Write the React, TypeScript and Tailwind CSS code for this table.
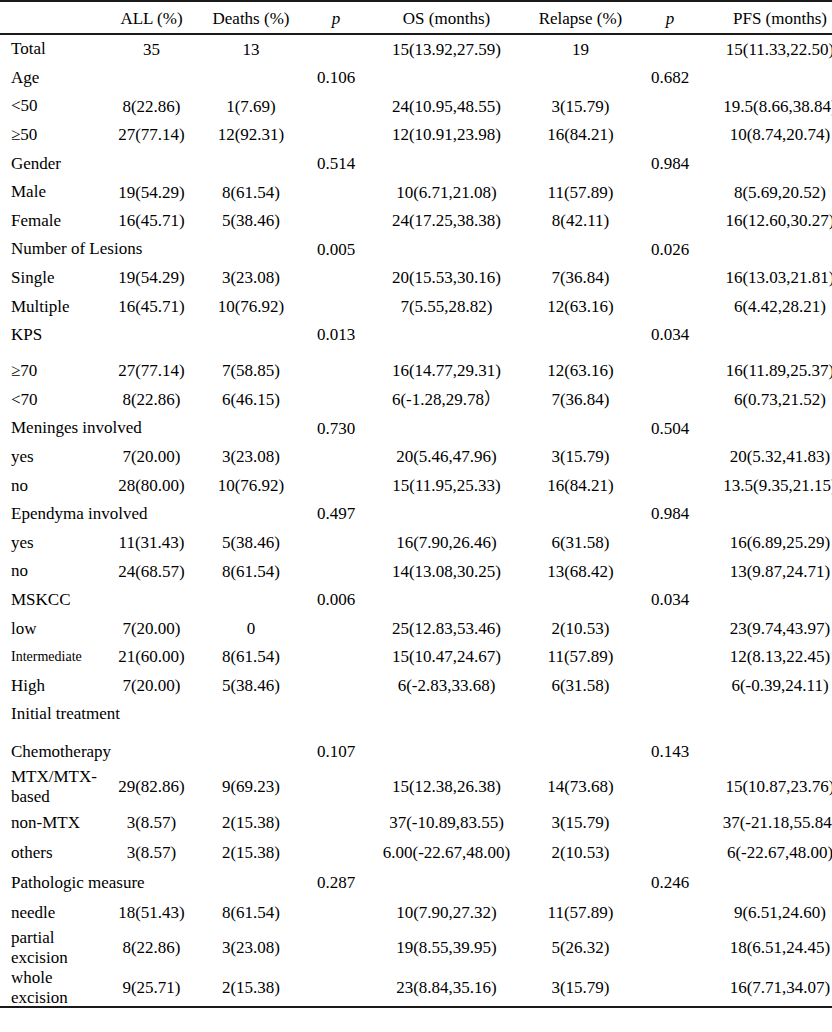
type Row = {
  label: React.ReactNode
  all?: string
  deaths?: string
  p1?: string
  os?: string
  relapse?: string
  p2?: string
  pfs?: string
  h?: string
  small?: boolean
  pad?: string
}

const rows: Row[] = [
  { label: 'Total', all: '35', deaths: '13', os: '15(13.92,27.59)', relapse: '19', pfs: '15(11.33,22.50)' },
  { label: 'Age', p1: '0.106', p2: '0.682' },
  { label: '<50', all: '8(22.86)', deaths: '1(7.69)', os: '24(10.95,48.55)', relapse: '3(15.79)', pfs: '19.5(8.66,38.84)' },
  { label: '≥50', all: '27(77.14)', deaths: '12(92.31)', os: '12(10.91,23.98)', relapse: '16(84.21)', pfs: '10(8.74,20.74)' },
  { label: 'Gender', p1: '0.514', p2: '0.984' },
  { label: 'Male', all: '19(54.29)', deaths: '8(61.54)', os: '10(6.71,21.08)', relapse: '11(57.89)', pfs: '8(5.69,20.52)' },
  { label: 'Female', all: '16(45.71)', deaths: '5(38.46)', os: '24(17.25,38.38)', relapse: '8(42.11)', pfs: '16(12.60,30.27)' },
  { label: 'Number of Lesions', p1: '0.005', p2: '0.026' },
  { label: 'Single', all: '19(54.29)', deaths: '3(23.08)', os: '20(15.53,30.16)', relapse: '7(36.84)', pfs: '16(13.03,21.81)' },
  { label: 'Multiple', all: '16(45.71)', deaths: '10(76.92)', os: '7(5.55,28.82)', relapse: '12(63.16)', pfs: '6(4.42,28.21)' },
  { label: 'KPS', p1: '0.013', p2: '0.034' },
  { label: '≥70', all: '27(77.14)', deaths: '7(58.85)', os: '16(14.77,29.31)', relapse: '12(63.16)', pfs: '16(11.89,25.37)', h: 'h-[36px]', pad: 'pt-[7px]' },
  { label: '<70', all: '8(22.86)', deaths: '6(46.15)', os: '6(-1.28,29.78）', relapse: '7(36.84)', pfs: '6(0.73,21.52)' },
  { label: 'Meninges involved', p1: '0.730', p2: '0.504' },
  { label: 'yes', all: '7(20.00)', deaths: '3(23.08)', os: '20(5.46,47.96)', relapse: '3(15.79)', pfs: '20(5.32,41.83)' },
  { label: 'no', all: '28(80.00)', deaths: '10(76.92)', os: '15(11.95,25.33)', relapse: '16(84.21)', pfs: '13.5(9.35,21.15)' },
  { label: 'Ependyma involved', p1: '0.497', p2: '0.984' },
  { label: 'yes', all: '11(31.43)', deaths: '5(38.46)', os: '16(7.90,26.46)', relapse: '6(31.58)', pfs: '16(6.89,25.29)' },
  { label: 'no', all: '24(68.57)', deaths: '8(61.54)', os: '14(13.08,30.25)', relapse: '13(68.42)', pfs: '13(9.87,24.71)' },
  { label: 'MSKCC', p1: '0.006', p2: '0.034' },
  { label: 'low', all: '7(20.00)', deaths: '0', os: '25(12.83,53.46)', relapse: '2(10.53)', pfs: '23(9.74,43.97)' },
  { label: 'Intermediate', all: '21(60.00)', deaths: '8(61.54)', os: '15(10.47,24.67)', relapse: '11(57.89)', pfs: '12(8.13,22.45)', small: true },
  { label: 'High', all: '7(20.00)', deaths: '5(38.46)', os: '6(-2.83,33.68)', relapse: '6(31.58)', pfs: '6(-0.39,24.11)' },
  { label: 'Initial treatment' },
  { label: 'Chemotherapy', p1: '0.107', p2: '0.143', h: 'h-[38px]', pad: 'pt-[9px]' },
  { label: <>MTX/MTX-<br />based</>, all: '29(82.86)', deaths: '9(69.23)', os: '15(12.38,26.38)', relapse: '14(73.68)', pfs: '15(10.87,23.76)', h: 'h-[41px]' },
  { label: 'non-MTX', all: '3(8.57)', deaths: '2(15.38)', os: '37(-10.89,83.55)', relapse: '3(15.79)', pfs: '37(-21.18,55.84)', h: 'h-[30px]' },
  { label: 'others', all: '3(8.57)', deaths: '2(15.38)', os: '6.00(-22.67,48.00)', relapse: '2(10.53)', pfs: '6(-22.67,48.00)', h: 'h-[30px]' },
  { label: 'Pathologic measure', p1: '0.287', p2: '0.246', h: 'h-[30px]' },
  { label: 'needle', all: '18(51.43)', deaths: '8(61.54)', os: '10(7.90,27.32)', relapse: '11(57.89)', pfs: '9(6.51,24.60)', h: 'h-[30px]' },
  { label: <>partial<br />excision</>, all: '8(22.86)', deaths: '3(23.08)', os: '19(8.55,39.95)', relapse: '5(26.32)', pfs: '18(6.51,24.45)', h: 'h-[40px]' },
  { label: <>whole<br />excision</>, all: '9(25.71)', deaths: '2(15.38)', os: '23(8.84,35.16)', relapse: '3(15.79)', pfs: '16(7.71,34.07)', h: 'h-[38px]' },
]

const cols = 'grid grid-cols-[105px_93px_106px_64px_157px_111px_68px_152px]'

function Cell({ children, left }: { children?: React.ReactNode; left?: boolean }) {
  return (
    <div
      className={
        left
          ? 'flex items-center pl-[11px] whitespace-nowrap leading-[20px] overflow-visible'
          : 'flex items-center justify-center whitespace-nowrap'
      }
    >
      {children}
    </div>
  )
}

export default function App() {
  return (
    <div
      className="w-[832px] h-[1032px] overflow-hidden bg-white text-black text-[17px]"
      style={{ fontFamily: '"Liberation Serif", "Noto Sans CJK SC", serif' }}
    >
      <div className="w-[856px]">
        <div className={`${cols} h-[35px] border-t-2 border-b-2 border-[#1a1a1a] pt-[3px]`}>
          <Cell left />
          <Cell>ALL (%)</Cell>
          <Cell>Deaths (%)</Cell>
          <Cell>
            <span className="italic">p</span>
          </Cell>
          <Cell>OS (months)</Cell>
          <Cell>Relapse (%)</Cell>
          <Cell>
            <span className="italic">p</span>
          </Cell>
          <Cell>PFS (months)</Cell>
        </div>

        <div>
          {rows.map((r, i) => (
            <div key={i} className={`${cols} ${r.h ?? 'h-[28.6px]'} ${r.pad ?? ''}`}>
              <Cell left>{r.small ? <span className="text-[14px]">{r.label}</span> : r.label}</Cell>
              <Cell>{r.all}</Cell>
              <Cell>{r.deaths}</Cell>
              <Cell>{r.p1}</Cell>
              <Cell>{r.os}</Cell>
              <Cell>{r.relapse}</Cell>
              <Cell>{r.p2}</Cell>
              <Cell>{r.pfs}</Cell>
            </div>
          ))}
        </div>
        <div className="h-[2px] bg-[#1a1a1a]" />
      </div>
    </div>
  )
}
